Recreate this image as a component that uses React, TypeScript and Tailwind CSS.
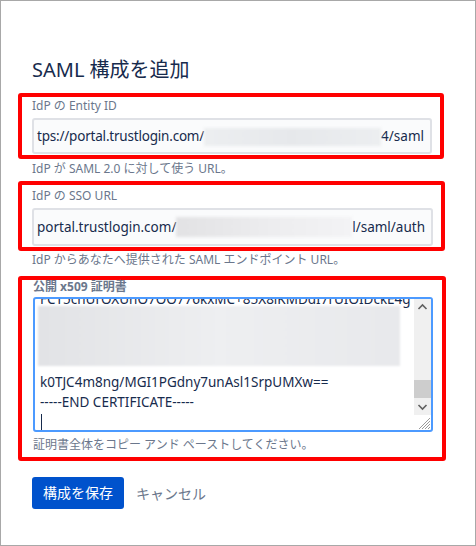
import React from "react";

const font = { fontFamily: '"Noto Sans", "Noto Sans CJK JP", sans-serif' };

export default function App() {
  return (
    <div
      className="w-[476px] h-[546px] border border-[#a8a8a8] bg-white overflow-hidden text-[#172b4d] flex flex-col"
      style={font}
    >
      <div className="pl-[31px] pt-[55px] text-[20px] leading-[28px] text-[#172b4d]">
        SAML 構成を追加
      </div>

      {/* Box 1 */}
      <div className="ml-[17px] mt-[9px] w-[426px] h-[66px] border-4 border-[#ff0000] rounded-[3px] pl-[10px] pr-[8px] pt-[1px] flex flex-col">
        <div className="text-[12px] leading-[16px] text-[#6b778c]">IdP の Entity ID</div>
        <div className="mt-[4px] h-[36px] rounded-[3px] border-2 border-[#dfe1e6] bg-[#fafbfc] overflow-hidden flex items-center pl-[3px] pr-[6px] text-[13.5px] leading-[20px] whitespace-nowrap">
          <span className="shrink-0 tracking-[-0.2px]">tps://portal.trustlogin.com/</span>
          <div className="flex-1 h-[18px] mt-[1px] bg-gradient-to-r from-[#eceef0] via-[#e6e8eb] to-[#eceef0] blur-[1.5px]" />
          <span className="shrink-0">4/saml</span>
        </div>
      </div>
      <div className="pl-[31px] mt-[2px] text-[12px] leading-[16px] text-[#6b778c]">
        IdP が SAML 2.0 に対して使う URL。
      </div>

      {/* Box 2 */}
      <div className="ml-[17px] mt-[4px] w-[427px] h-[70px] border-4 border-[#ff0000] rounded-[3px] pl-[10px] pr-[8px] pt-[3px] flex flex-col">
        <div className="text-[12px] leading-[16px] text-[#6b778c]">IdP の SSO URL</div>
        <div className="mt-[4px] h-[38px] rounded-[3px] border-2 border-[#dfe1e6] bg-[#fafbfc] overflow-hidden flex items-center pl-[3px] pr-[6px] text-[13.5px] leading-[20px] whitespace-nowrap">
          <span className="shrink-0">portal.trustlogin.com/</span>
          <div className="flex-1 h-[20px] bg-gradient-to-r from-[#e2e2e4] via-[#ececee] to-[#f3f3f5] blur-[1.5px]" />
          <span className="shrink-0">l/saml/auth</span>
        </div>
      </div>
      <div className="pl-[31px] mt-[1px] text-[12px] leading-[16px] text-[#6b778c]">
        IdP からあなたへ提供された SAML エンドポイント URL。
      </div>

      {/* Box 3 */}
      <div className="ml-[17px] mt-[8px] w-[428px] h-[185px] border-4 border-[#ff0000] rounded-[3px] pl-[11px] pr-[9px] flex flex-col">
        <div className="text-[12px] leading-[16px] font-bold text-[#6b778c] -mt-[1px]">公開 x509 証明書</div>
        <div className="mt-[2px] h-[135px] rounded-[3px] border-2 border-[#4c9aff] bg-white overflow-hidden flex">
          <div className="flex-1 overflow-hidden pl-[3px]">
            <div className="-mt-[10px] flex flex-col text-[13.5px] leading-[20px] whitespace-nowrap text-[#172b4d]">
              <div className="pl-[2px]">FCT5cnUrOXUnO7OO776kxMC+85X8lKMDdI7rUIOIDckE4g</div>
              <div className="h-[60px] -mt-[3px] w-[362px] bg-gradient-to-r from-[#e2e3e6] via-[#eeeff1] to-[#e8e9ec] blur-[1px]" />
              <div className="h-[6px]" />
              <div className="pl-[2px]">k0TJC4m8ng/MGI1PGdny7unAsl1SrpUMXw==</div>
              <div className="pl-[2px]">-----END CERTIFICATE-----</div>
              <div className="h-[20px] flex items-center pl-[3px]">
                <div className="w-[1px] h-[17px] bg-[#172b4d]" />
              </div>
            </div>
          </div>
          {/* scrollbar + resizer */}
          <div className="w-[17px] flex flex-col">
            <div className="h-[116px] bg-[#f0f0f0] flex flex-col items-center">
              <svg width="17" height="17" viewBox="0 0 17 17" className="shrink-0">
                <polyline points="4.5,10 8.5,6 12.5,10" fill="none" stroke="#606060" strokeWidth="1.6" />
              </svg>
              <div className="flex-1 w-full flex flex-col justify-end">
                <div className="h-[18px] bg-[#cdcdcd]" />
              </div>
              <svg width="17" height="17" viewBox="0 0 17 17" className="shrink-0">
                <polyline points="4.5,7 8.5,11 12.5,7" fill="none" stroke="#606060" strokeWidth="1.6" />
              </svg>
            </div>
            <div className="flex-1 flex items-end justify-end">
              <svg width="15" height="15" viewBox="0 0 15 15">
                <line x1="3" y1="14" x2="14" y2="3" stroke="#9a9a9a" strokeWidth="1" />
                <line x1="6" y1="14" x2="14" y2="6" stroke="#9a9a9a" strokeWidth="1" />
                <line x1="9" y1="14" x2="14" y2="9" stroke="#9a9a9a" strokeWidth="1" />
                <line x1="12" y1="14" x2="14" y2="12" stroke="#9a9a9a" strokeWidth="1" />
              </svg>
            </div>
          </div>
        </div>
        <div className="mt-[5px] text-[12px] leading-[16px] text-[#6b778c]">
          証明書全体をコピー アンド ペーストしてください。
        </div>
      </div>

      <div className="pl-[31px] mt-[16px] flex items-center gap-[12px]">
        <button className="h-[32px] px-[11px] rounded-[3px] bg-[#0052cc] text-white text-[14px] leading-[20px]">
          構成を保存
        </button>
        <span className="text-[14px] text-[#6b778c]">キャンセル</span>
      </div>
    </div>
  );
}
